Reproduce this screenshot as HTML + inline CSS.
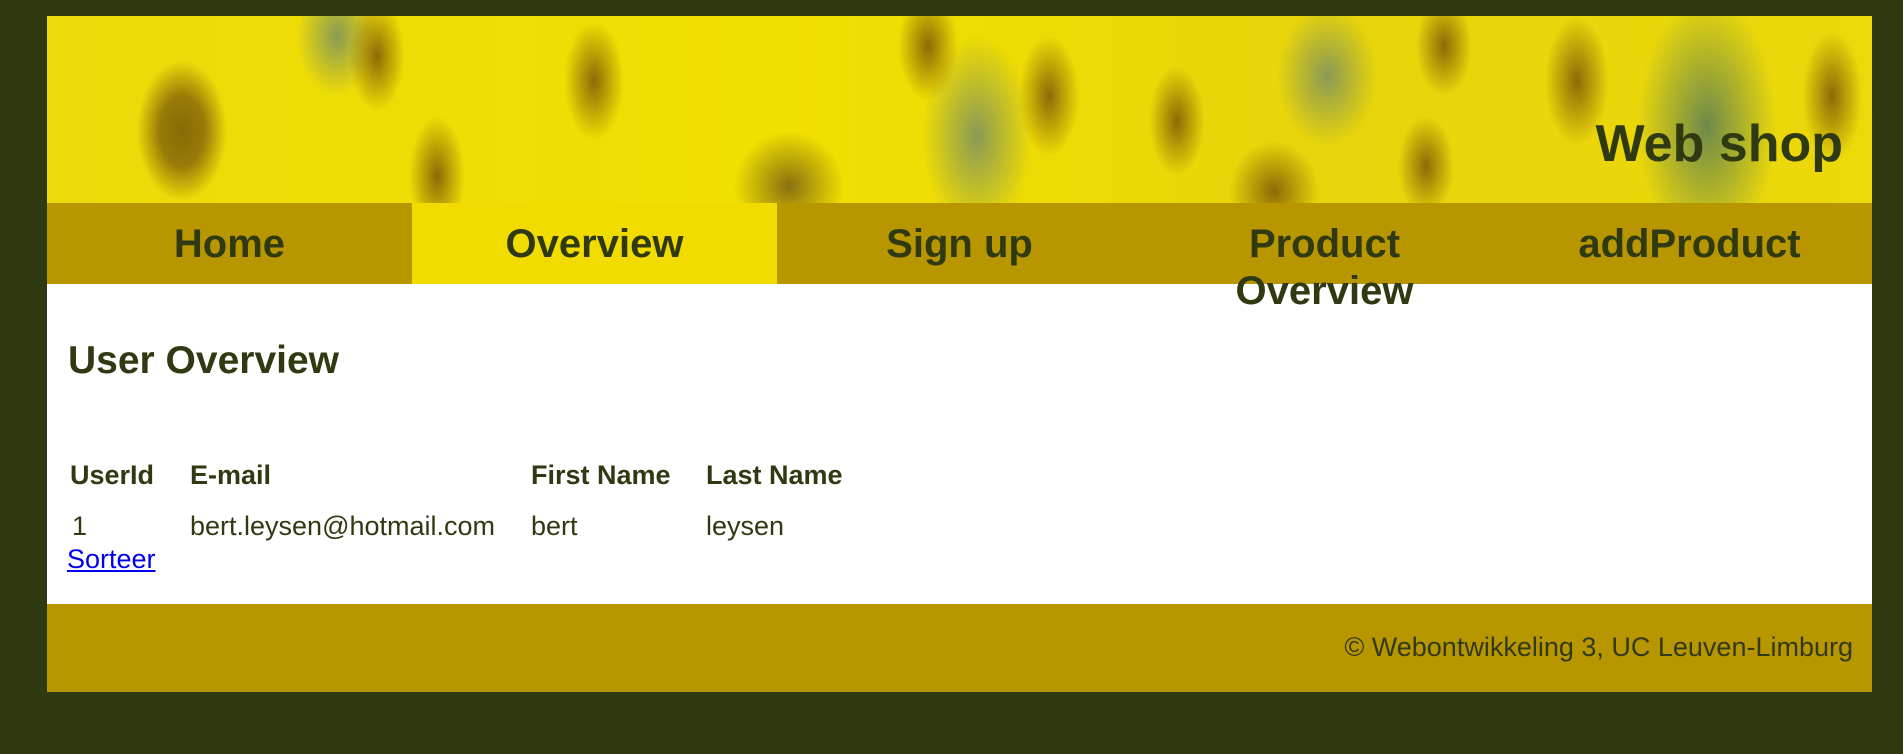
<!DOCTYPE html>
<html><head><meta charset="utf-8"><style>
html,body{margin:0;padding:0;}
body{background:#2f3a12;width:1903px;height:754px;overflow:hidden;font-family:"Liberation Sans",Arial,sans-serif;}
#wrap{position:absolute;left:47px;top:16px;width:1825px;}
#header{position:relative;height:187px;overflow:hidden;
background:
radial-gradient(ellipse 45px 70px at 135px 115px,#8a6a05 0%,#9a7a08 50%,rgba(154,122,8,0) 100%),
radial-gradient(ellipse 28px 60px at 390px 160px,#8d6a06 0%,rgba(141,106,6,0) 100%),
radial-gradient(ellipse 28px 55px at 330px 40px,#8d6a06 0%,rgba(141,106,6,0) 100%),
radial-gradient(ellipse 30px 60px at 547px 65px,#8d6a06 0%,rgba(141,106,6,0) 100%),
radial-gradient(ellipse 55px 55px at 742px 170px,#8a7010 0%,rgba(141,106,6,0) 100%),
radial-gradient(ellipse 30px 55px at 881px 30px,#8d6a06 0%,rgba(141,106,6,0) 100%),
radial-gradient(ellipse 30px 60px at 1002px 80px,#8d6a06 0%,rgba(141,106,6,0) 100%),
radial-gradient(ellipse 28px 55px at 1130px 105px,#8d6a06 0%,rgba(141,106,6,0) 100%),
radial-gradient(ellipse 45px 50px at 1227px 175px,#8d6a06 0%,rgba(141,106,6,0) 100%),
radial-gradient(ellipse 28px 50px at 1379px 150px,#8d6a06 0%,rgba(141,106,6,0) 100%),
radial-gradient(ellipse 28px 50px at 1397px 30px,#8d6a06 0%,rgba(141,106,6,0) 100%),
radial-gradient(ellipse 32px 65px at 1530px 65px,#8d6a06 0%,rgba(141,106,6,0) 100%),
radial-gradient(ellipse 30px 65px at 1785px 80px,#8d6a06 0%,rgba(141,106,6,0) 100%),
radial-gradient(ellipse 70px 130px at 1660px 110px,#6e8a4a 0%,rgba(110,138,74,0) 100%),
radial-gradient(ellipse 55px 100px at 930px 120px,#8a9a55 0%,rgba(138,154,85,0) 100%),
radial-gradient(ellipse 50px 70px at 1280px 60px,#8a9a55 0%,rgba(138,154,85,0) 100%),
radial-gradient(ellipse 40px 60px at 290px 20px,#8a9a55 0%,rgba(138,154,85,0) 100%),
linear-gradient(90deg,#ecd90a,#f2e000 40%,#e8d40a 70%,#ecd90a);}
#header h1{position:absolute;right:29px;top:98px;margin:0;font-size:52px;font-weight:bold;color:#2f3a12;line-height:60px;}
#nav{display:flex;height:81px;background:#b89600;position:relative;z-index:2;}
#nav div{width:365px;text-align:center;font-size:40px;font-weight:bold;color:#2f3a12;line-height:47px;padding:18px 50px 0;box-sizing:border-box;height:81px;white-space:normal;}
#nav div.act{background:#f2dc00;}
#main{background:#fff;height:320px;position:relative;z-index:1;}
#main h2{position:absolute;left:21px;top:55px;margin:0;font-size:39px;font-weight:bold;color:#2f3a12;}
.c{position:absolute;font-size:27px;color:#2f3a12;}
.b{font-weight:bold;}
#sort{position:absolute;left:20px;top:260px;font-size:27px;color:#0000ee;text-decoration:underline;}
#footer{background:#b89600;height:88px;position:relative;}
#footer p{position:absolute;right:19px;top:28px;margin:0;font-size:27px;color:#333a1a;}
</style></head><body>
<div id="wrap">
<div id="header"><h1>Web shop</h1></div>
<div id="nav"><div>Home</div><div class="act">Overview</div><div>Sign up</div><div>Product Overview</div><div>addProduct</div></div>
<div id="main">
<h2>User Overview</h2>
<span class="c b" style="left:23px;top:176px">UserId</span>
<span class="c b" style="left:143px;top:176px">E-mail</span>
<span class="c b" style="left:484px;top:176px">First Name</span>
<span class="c b" style="left:659px;top:176px">Last Name</span>
<span class="c" style="left:25px;top:227px">1</span>
<span class="c" style="left:143px;top:227px">bert.leysen@hotmail.com</span>
<span class="c" style="left:484px;top:227px">bert</span>
<span class="c" style="left:659px;top:227px">leysen</span>
<span id="sort">Sorteer</span>
</div>
<div id="footer"><p>© Webontwikkeling 3, UC Leuven-Limburg</p></div>
</div>
</body></html>
